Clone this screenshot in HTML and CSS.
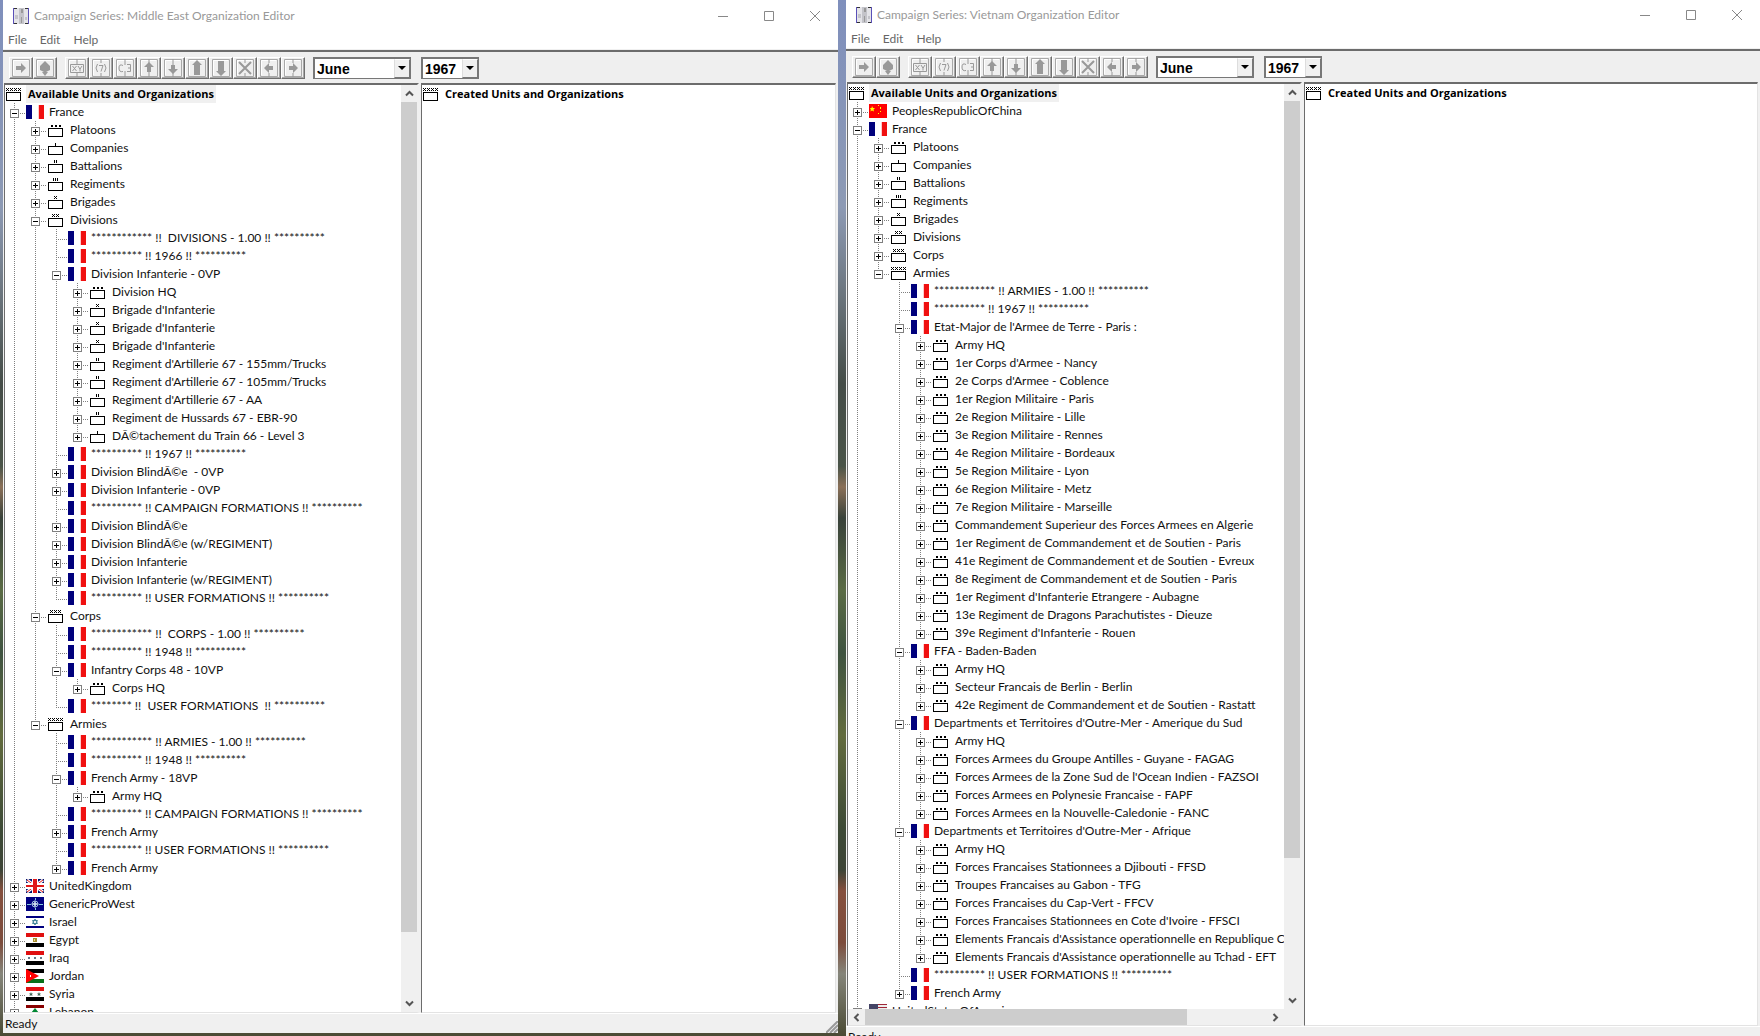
FILE: index.html
```html
<!DOCTYPE html>
<html lang="en">
<head>
<meta charset="utf-8">
<title>Organization Editor</title>
<link rel="stylesheet" href="styles.css">
</head>
<body>
<svg class="defs" width="0" height="0" aria-hidden="true">
  <symbol id="x" viewBox="0 0 3 3"><path d="M0 0h1v1h-1zM2 0h1v1h-1zM1 1h1v1h-1zM0 2h1v1h-1zM2 2h1v1h-1z"/></symbol>
  <symbol id="box" viewBox="0 0 18 18"><rect x="1.5" y="7.5" width="14" height="8" fill="#fff" stroke="#000"/></symbol>
  <symbol id="pl" viewBox="0 0 18 18"><use href="#box"/><path d="M4 4h2v2h-2zM8 4h2v2h-2zM12 4h2v2h-2z"/></symbol>
  <symbol id="co" viewBox="0 0 18 18"><use href="#box"/><path d="M8 4h1v3h-1z"/></symbol>
  <symbol id="bn" viewBox="0 0 18 18"><use href="#box"/><path d="M7 3h1v3h-1zM9 3h1v3h-1z"/></symbol>
  <symbol id="rg" viewBox="0 0 18 18"><use href="#box"/><path d="M6 3h1v3h-1zM8 3h1v3h-1zM10 3h1v3h-1z"/></symbol>
  <symbol id="bd" viewBox="0 0 18 18"><use href="#box"/><use href="#x" x="7" y="3" width="3" height="3"/></symbol>
  <symbol id="dv" viewBox="0 0 18 18"><use href="#box"/><use href="#x" x="5" y="3" width="3" height="3"/><use href="#x" x="9" y="3" width="3" height="3"/></symbol>
  <symbol id="cp" viewBox="0 0 18 18"><use href="#box"/><use href="#x" x="3" y="3" width="3" height="3"/><use href="#x" x="7" y="3" width="3" height="3"/><use href="#x" x="11" y="3" width="3" height="3"/></symbol>
  <symbol id="ar" viewBox="0 0 18 18"><use href="#box"/><use href="#x" x="1" y="3" width="3" height="3"/><use href="#x" x="5" y="3" width="3" height="3"/><use href="#x" x="9" y="3" width="3" height="3"/><use href="#x" x="13" y="3" width="3" height="3"/></symbol>
  <symbol id="fr" viewBox="0 0 18 18"><path fill="#00007c" d="M0 2h6v14h-6z"/><path fill="#fcc" d="M12 2h1v14h-1z"/><path fill="#f01010" d="M13 2h5v14h-5z"/></symbol>
  <symbol id="cn" viewBox="0 0 18 18"><path fill="#f00" d="M0 2h18v14H0z"/><path fill="#ff0" d="M3 4l1 2h2l-1.500 1.500.5 2-2-1-1.500 1 .3-2L1 6h1.500zM9 3h1v1h-1zM11 5h1v2h-1zM11 9h1v1h-1zM9 11h1v1h-1z"/></symbol>
  <symbol id="uk" viewBox="0 0 18 18"><path fill="#00106c" d="M0 2h18v14H0z"/><path stroke="#fff" stroke-width="3" d="M1 3l16 12M17 3L1 15"/><path stroke="#e01818" d="M1 3l16 12M17 3L1 15"/><path fill="#fff" d="M6 2h6v14H6zM0 6h18v6H0z"/><path fill="#e01818" d="M7 2h4v14H7zM0 8h18v2H0z"/></symbol>
  <symbol id="gp" viewBox="0 0 18 18"><path fill="#000080" d="M0 2h18v14H0z"/><circle cx="9" cy="9" r="3" fill="none" stroke="#9bd"/><path stroke="#8cd" d="M1 9.500h4M13 9.500h4M9.500 3v2M9.500 13v2"/><path fill="#cde" d="M9 5l1 3 3 1-3 1-1 3-1-3-3-1 3-1z"/></symbol>
  <symbol id="il" viewBox="0 0 18 18"><path fill="#000080" d="M0 3h18v2H0zM0 13h18v2H0z"/><path fill="none" stroke="#47889c" d="M9 6l2.500 4.500h-5zM9 12L6.500 7.500h5z"/></symbol>
  <symbol id="eg" viewBox="0 0 18 18"><path fill="#e01010" d="M0 2h18v4H0z"/><path d="M0 12h18v4H0z"/><path fill="#a89030" d="M7 7h4v4H7z"/><path fill="#e8d8a0" d="M8 8h1v2h-1z"/></symbol>
  <symbol id="iq" viewBox="0 0 18 18"><path fill="#e01010" d="M0 2h18v4H0z"/><path d="M0 12h18v4H0z"/><path fill="#678" d="M2 8h2v2H2zM8 8h2v2H8zM14 8h2v2h-2z"/></symbol>
  <symbol id="jo" viewBox="0 0 18 18"><path d="M0 2h18v4H0z"/><path fill="#087018" d="M0 12h18v4H0z"/><path fill="#f00" d="M0 2l13 7L0 16z"/><path fill="#fff" d="M4 8h1v2H4z"/></symbol>
  <symbol id="sy" viewBox="0 0 18 18"><path fill="#e01010" d="M0 2h18v4H0z"/><path d="M0 12h18v4H0z"/><path fill="#465" d="M5 7l.6 1.500H7L6 9.500l.5 1.500L5 10.200 3.500 11 4 9.500 3 8.500h1.400zM13 7l.6 1.500H15l-1 1 .5 1.500-1.500-.8-1.500.8.5-1.500-1-1h1.400z"/></symbol>
  <symbol id="lb" viewBox="0 0 18 18"><path fill="#800" d="M0 2h18v3H0zM0 13h18v3H0z"/><path fill="#083" d="M9 5l4 5h-3v2H8v-2H5z"/></symbol>
  <symbol id="us" viewBox="0 0 18 18"><path fill="#eee" d="M0 2h18v14H0z"/><path fill="#a02838" d="M0 2h18v1H0zM0 5h18v1H0zM0 8h18v1H0zM0 11h18v1H0zM0 14h18v1H0z"/><path fill="#446" d="M0 2h9v7H0z"/></symbol>
  <symbol id="app" viewBox="0 0 16 16"><path fill="#e4e4e8" d="M0 0h16v16H0z"/><path fill="#c4c4ca" d="M6 0h5v16H6zM2 7h3v4H2zM12 9h2v3h-2z"/><path fill="#999" d="M8 1h2v4H8zM8 9h1v6H8z"/><path fill="#5a50b8" d="M0 0h1v16H0zM15 0h1v16h-1z"/><path fill="#333" d="M1 0h3v1H1zM12 0h3v1h-3zM1 15h3v1H1zM12 15h3v1h-3z"/></symbol>
  <symbol id="frame" viewBox="0 0 18 18"><path fill="none" stroke="#a8a8a8" d="M.5.500h17v17H.5z"/><path fill="none" stroke="#fff" d="M1.500 16V1.500H16"/></symbol>
  <symbol id="t-right" viewBox="0 0 18 18"><use href="#frame"/><path fill="#999" d="M4 7h5V4l5 5-5 5v-3H4z"/></symbol>
  <symbol id="t-club" viewBox="0 0 18 18"><use href="#frame"/><path fill="#999" d="M9 2l5 5v4l-4 2h2l-3 4-3-4h2l-4-2V7z"/></symbol>
  <symbol id="t-xy" viewBox="0 0 18 18"><use href="#frame"/><path fill="none" stroke="#999" d="M2.500 5.500h13v8h-13zM9 0v5M9 14v4M4.500 7l4 5M8.500 7l-4 5M10 7l2 3 2-3M12 9.500v3"/></symbol>
  <symbol id="t-seven" viewBox="0 0 18 18"><use href="#frame"/><path fill="none" stroke="#999" d="M9 0v4M9 14v4M5.500 5q-3 4 0 8M12.500 5q3 4 0 8M7 6.500h4l-2 6"/></symbol>
  <symbol id="t-c3" viewBox="0 0 18 18"><use href="#frame"/><path fill="none" stroke="#999" d="M9 0v6M9 12v6M7 6.500Q3 4.500 3 9t4 3.500M11 5.500h3.500V9H12M14.500 9v3.500H11"/></symbol>
  <symbol id="t-up" viewBox="0 0 18 18"><use href="#frame"/><path fill="#999" d="M9 3l5 5h-3v5H7V8H4z"/><path stroke="#999" d="M9 0v18"/></symbol>
  <symbol id="t-down" viewBox="0 0 18 18"><use href="#frame"/><path fill="#999" d="M9 15l5-5h-3V6H7v4H4z"/><path stroke="#999" d="M9 0v18"/></symbol>
  <symbol id="t-bigup" viewBox="0 0 18 18"><use href="#frame"/><path fill="#999" d="M9 1l5 5h-2v10H6V6H4z"/></symbol>
  <symbol id="t-bigdown" viewBox="0 0 18 18"><use href="#frame"/><path fill="#999" d="M9 17l5-5h-2V2H6v10H4z"/></symbol>
  <symbol id="t-x" viewBox="0 0 18 18"><use href="#frame"/><path stroke="#999" stroke-width="2" d="M3 3l12 12M15 3L3 15"/><path stroke="#999" d="M9 0v4M9 14v4"/></symbol>
  <symbol id="t-l" viewBox="0 0 18 18"><use href="#frame"/><path fill="#999" d="M4 9l5-5v3h4v4H9v3z"/><path stroke="#999" d="M9 0v4M9 14v4"/></symbol>
  <symbol id="t-r" viewBox="0 0 18 18"><use href="#frame"/><path fill="#999" d="M14 9L9 4v3H5v4h4v3z"/><path stroke="#999" d="M9 0v4M9 14v4"/></symbol>
  <symbol id="min" viewBox="0 0 10 10"><path stroke="#888" d="M0 5.500h10"/></symbol>
  <symbol id="max" viewBox="0 0 10 10"><path fill="none" stroke="#888" d="M.5.500h9v9h-9z"/></symbol>
  <symbol id="close" viewBox="0 0 10 10"><path stroke="#888" d="M0 0l10 10M10 0L0 10"/></symbol>
  <symbol id="chev" viewBox="0 0 9 9"><path fill="none" stroke="#555" stroke-width="2" d="M1 6.500L4.500 3 8 6.500"/></symbol>
</svg>

<section class="window window-me">
  <header class="title">
    <svg width="16" height="16"><use href="#app"/></svg>
    <h1>Campaign Series: Middle East Organization Editor</h1>
    <button aria-label="Minimize"><svg width="10" height="10"><use href="#min"/></svg></button>
    <button aria-label="Maximize"><svg width="10" height="10"><use href="#max"/></svg></button>
    <button aria-label="Close"><svg width="10" height="10"><use href="#close"/></svg></button>
  </header>
  <nav class="menu"><button>File</button><button>Edit</button><button>Help</button></nav>
  <div class="toolbar">
    <div class="tools">
      <button aria-label="Add"><svg><use href="#t-right"/></svg></button>
      <button aria-label="Add all"><svg><use href="#t-club"/></svg></button>
    </div>
    <div class="tools">
      <button aria-label="Location"><svg><use href="#t-xy"/></svg></button>
      <button aria-label="Strength"><svg><use href="#t-seven"/></svg></button>
      <button aria-label="Command"><svg><use href="#t-c3"/></svg></button>
      <button aria-label="Up"><svg><use href="#t-up"/></svg></button>
      <button aria-label="Down"><svg><use href="#t-down"/></svg></button>
      <button aria-label="Move up"><svg><use href="#t-bigup"/></svg></button>
      <button aria-label="Move down"><svg><use href="#t-bigdown"/></svg></button>
      <button aria-label="Delete"><svg><use href="#t-x"/></svg></button>
      <button aria-label="Left"><svg><use href="#t-l"/></svg></button>
      <button aria-label="Right"><svg><use href="#t-r"/></svg></button>
    </div>
    <div class="combo month"><select aria-label="Month"><option>June</option></select><span></span></div>
    <div class="combo year"><select aria-label="Year"><option>1967</option></select><span></span></div>
  </div>
  <main class="panes">
    <div class="pane available">
      <div class="tree">
        <div class="root selected"><svg><use href="#ar"/></svg><h2>Available Units and Organizations</h2></div>
        <ul>
          <li><div><button class="minus" aria-label="Collapse"></button><svg><use href="#fr"/></svg>France</div>
            <ul>
              <li><div><button aria-label="Expand"></button><svg><use href="#pl"/></svg>Platoons</div></li>
              <li><div><button aria-label="Expand"></button><svg><use href="#co"/></svg>Companies</div></li>
              <li><div><button aria-label="Expand"></button><svg><use href="#bn"/></svg>Battalions</div></li>
              <li><div><button aria-label="Expand"></button><svg><use href="#rg"/></svg>Regiments</div></li>
              <li><div><button aria-label="Expand"></button><svg><use href="#bd"/></svg>Brigades</div></li>
              <li><div><button class="minus" aria-label="Collapse"></button><svg><use href="#dv"/></svg>Divisions</div>
                <ul>
                  <li><div><svg><use href="#fr"/></svg>************ !!  DIVISIONS - 1.00 !! **********</div></li>
                  <li><div><svg><use href="#fr"/></svg>********** !! 1966 !! **********</div></li>
                  <li><div><button class="minus" aria-label="Collapse"></button><svg><use href="#fr"/></svg>Division Infanterie - 0VP</div>
                    <ul>
                      <li><div><button aria-label="Expand"></button><svg><use href="#pl"/></svg>Division HQ</div></li>
                      <li><div><button aria-label="Expand"></button><svg><use href="#bd"/></svg>Brigade d'Infanterie</div></li>
                      <li><div><button aria-label="Expand"></button><svg><use href="#bd"/></svg>Brigade d'Infanterie</div></li>
                      <li><div><button aria-label="Expand"></button><svg><use href="#bd"/></svg>Brigade d'Infanterie</div></li>
                      <li><div><button aria-label="Expand"></button><svg><use href="#bn"/></svg>Regiment d'Artillerie 67 - 155mm/Trucks</div></li>
                      <li><div><button aria-label="Expand"></button><svg><use href="#bn"/></svg>Regiment d'Artillerie 67 - 105mm/Trucks</div></li>
                      <li><div><button aria-label="Expand"></button><svg><use href="#bn"/></svg>Regiment d'Artillerie 67 - AA</div></li>
                      <li><div><button aria-label="Expand"></button><svg><use href="#bn"/></svg>Regiment de Hussards 67 - EBR-90</div></li>
                      <li><div><button aria-label="Expand"></button><svg><use href="#co"/></svg>DÃ©tachement du Train 66 - Level 3</div></li>
                    </ul></li>
                  <li><div><svg><use href="#fr"/></svg>********** !! 1967 !! **********</div></li>
                  <li><div><button aria-label="Expand"></button><svg><use href="#fr"/></svg>Division BlindÃ©e  - 0VP</div></li>
                  <li><div><button aria-label="Expand"></button><svg><use href="#fr"/></svg>Division Infanterie - 0VP</div></li>
                  <li><div><svg><use href="#fr"/></svg>********** !! CAMPAIGN FORMATIONS !! **********</div></li>
                  <li><div><button aria-label="Expand"></button><svg><use href="#fr"/></svg>Division BlindÃ©e</div></li>
                  <li><div><button aria-label="Expand"></button><svg><use href="#fr"/></svg>Division BlindÃ©e (w/REGIMENT)</div></li>
                  <li><div><button aria-label="Expand"></button><svg><use href="#fr"/></svg>Division Infanterie</div></li>
                  <li><div><button aria-label="Expand"></button><svg><use href="#fr"/></svg>Division Infanterie (w/REGIMENT)</div></li>
                  <li><div><svg><use href="#fr"/></svg>********** !! USER FORMATIONS !! **********</div></li>
                </ul></li>
              <li><div><button class="minus" aria-label="Collapse"></button><svg><use href="#cp"/></svg>Corps</div>
                <ul>
                  <li><div><svg><use href="#fr"/></svg>************ !!  CORPS - 1.00 !! **********</div></li>
                  <li><div><svg><use href="#fr"/></svg>********** !! 1948 !! **********</div></li>
                  <li><div><button class="minus" aria-label="Collapse"></button><svg><use href="#fr"/></svg>Infantry Corps 48 - 10VP</div>
                    <ul>
                      <li><div><button aria-label="Expand"></button><svg><use href="#pl"/></svg>Corps HQ</div></li>
                    </ul></li>
                  <li><div><svg><use href="#fr"/></svg>******** !!  USER FORMATIONS  !! **********</div></li>
                </ul></li>
              <li><div><button class="minus" aria-label="Collapse"></button><svg><use href="#ar"/></svg>Armies</div>
                <ul>
                  <li><div><svg><use href="#fr"/></svg>************ !! ARMIES - 1.00 !! **********</div></li>
                  <li><div><svg><use href="#fr"/></svg>********** !! 1948 !! **********</div></li>
                  <li><div><button class="minus" aria-label="Collapse"></button><svg><use href="#fr"/></svg>French Army - 18VP</div>
                    <ul>
                      <li><div><button aria-label="Expand"></button><svg><use href="#pl"/></svg>Army HQ</div></li>
                    </ul></li>
                  <li><div><svg><use href="#fr"/></svg>********** !! CAMPAIGN FORMATIONS !! **********</div></li>
                  <li><div><button aria-label="Expand"></button><svg><use href="#fr"/></svg>French Army</div></li>
                  <li><div><svg><use href="#fr"/></svg>********** !! USER FORMATIONS !! **********</div></li>
                  <li><div><button aria-label="Expand"></button><svg><use href="#fr"/></svg>French Army</div></li>
                </ul></li>
            </ul></li>
          <li><div><button aria-label="Expand"></button><svg><use href="#uk"/></svg>UnitedKingdom</div></li>
          <li><div><button aria-label="Expand"></button><svg><use href="#gp"/></svg>GenericProWest</div></li>
          <li><div><button aria-label="Expand"></button><svg><use href="#il"/></svg>Israel</div></li>
          <li><div><button aria-label="Expand"></button><svg><use href="#eg"/></svg>Egypt</div></li>
          <li><div><button aria-label="Expand"></button><svg><use href="#iq"/></svg>Iraq</div></li>
          <li><div><button aria-label="Expand"></button><svg><use href="#jo"/></svg>Jordan</div></li>
          <li><div><button aria-label="Expand"></button><svg><use href="#sy"/></svg>Syria</div></li>
          <li><div><button aria-label="Expand"></button><svg><use href="#lb"/></svg>Lebanon</div></li>
        </ul>
      </div>
      <div class="vscroll">
        <button aria-label="Scroll up"><svg><use href="#chev"/></svg></button>
        <div class="track"><div class="thumb" style="height:93%"></div></div>
        <button aria-label="Scroll down"><svg class="down"><use href="#chev"/></svg></button>
      </div>
    </div>
    <div class="pane created">
      <div class="tree"><div class="root"><svg><use href="#ar"/></svg><h2>Created Units and Organizations</h2></div></div>
    </div>
  </main>
  <footer class="status">Ready<svg class="grip" width="12" height="12"><path stroke="#999" stroke-width="2" d="M0 12L12 0M4 12l8-8M8 12l4-4"/></svg></footer>
</section>

<section class="window window-vn">
  <header class="title">
    <svg width="16" height="16"><use href="#app"/></svg>
    <h1>Campaign Series: Vietnam Organization Editor</h1>
    <button aria-label="Minimize"><svg width="10" height="10"><use href="#min"/></svg></button>
    <button aria-label="Maximize"><svg width="10" height="10"><use href="#max"/></svg></button>
    <button aria-label="Close"><svg width="10" height="10"><use href="#close"/></svg></button>
  </header>
  <nav class="menu"><button>File</button><button>Edit</button><button>Help</button></nav>
  <div class="toolbar">
    <div class="tools">
      <button aria-label="Add"><svg><use href="#t-right"/></svg></button>
      <button aria-label="Add all"><svg><use href="#t-club"/></svg></button>
    </div>
    <div class="tools">
      <button aria-label="Location"><svg><use href="#t-xy"/></svg></button>
      <button aria-label="Strength"><svg><use href="#t-seven"/></svg></button>
      <button aria-label="Command"><svg><use href="#t-c3"/></svg></button>
      <button aria-label="Up"><svg><use href="#t-up"/></svg></button>
      <button aria-label="Down"><svg><use href="#t-down"/></svg></button>
      <button aria-label="Move up"><svg><use href="#t-bigup"/></svg></button>
      <button aria-label="Move down"><svg><use href="#t-bigdown"/></svg></button>
      <button aria-label="Delete"><svg><use href="#t-x"/></svg></button>
      <button aria-label="Left"><svg><use href="#t-l"/></svg></button>
      <button aria-label="Right"><svg><use href="#t-r"/></svg></button>
    </div>
    <div class="combo month"><select aria-label="Month"><option>June</option></select><span></span></div>
    <div class="combo year"><select aria-label="Year"><option>1967</option></select><span></span></div>
  </div>
  <main class="panes">
    <div class="pane available">
      <div class="tree">
        <div class="root selected"><svg><use href="#ar"/></svg><h2>Available Units and Organizations</h2></div>
        <ul>
          <li><div><button aria-label="Expand"></button><svg><use href="#cn"/></svg>PeoplesRepublicOfChina</div></li>
          <li><div><button class="minus" aria-label="Collapse"></button><svg><use href="#fr"/></svg>France</div>
            <ul>
              <li><div><button aria-label="Expand"></button><svg><use href="#pl"/></svg>Platoons</div></li>
              <li><div><button aria-label="Expand"></button><svg><use href="#co"/></svg>Companies</div></li>
              <li><div><button aria-label="Expand"></button><svg><use href="#bn"/></svg>Battalions</div></li>
              <li><div><button aria-label="Expand"></button><svg><use href="#rg"/></svg>Regiments</div></li>
              <li><div><button aria-label="Expand"></button><svg><use href="#bd"/></svg>Brigades</div></li>
              <li><div><button aria-label="Expand"></button><svg><use href="#dv"/></svg>Divisions</div></li>
              <li><div><button aria-label="Expand"></button><svg><use href="#cp"/></svg>Corps</div></li>
              <li><div><button class="minus" aria-label="Collapse"></button><svg><use href="#ar"/></svg>Armies</div>
                <ul>
                  <li><div><svg><use href="#fr"/></svg>************ !! ARMIES - 1.00 !! **********</div></li>
                  <li><div><svg><use href="#fr"/></svg>********** !! 1967 !! **********</div></li>
                  <li><div><button class="minus" aria-label="Collapse"></button><svg><use href="#fr"/></svg>Etat-Major de l'Armee de Terre - Paris :</div>
                    <ul>
                      <li><div><button aria-label="Expand"></button><svg><use href="#pl"/></svg>Army HQ</div></li>
                      <li><div><button aria-label="Expand"></button><svg><use href="#pl"/></svg>1er Corps d'Armee - Nancy</div></li>
                      <li><div><button aria-label="Expand"></button><svg><use href="#pl"/></svg>2e Corps d'Armee - Coblence</div></li>
                      <li><div><button aria-label="Expand"></button><svg><use href="#pl"/></svg>1er Region Militaire - Paris</div></li>
                      <li><div><button aria-label="Expand"></button><svg><use href="#pl"/></svg>2e Region Militaire - Lille</div></li>
                      <li><div><button aria-label="Expand"></button><svg><use href="#pl"/></svg>3e Region Militaire - Rennes</div></li>
                      <li><div><button aria-label="Expand"></button><svg><use href="#pl"/></svg>4e Region Militaire - Bordeaux</div></li>
                      <li><div><button aria-label="Expand"></button><svg><use href="#pl"/></svg>5e Region Militaire - Lyon</div></li>
                      <li><div><button aria-label="Expand"></button><svg><use href="#pl"/></svg>6e Region Militaire - Metz</div></li>
                      <li><div><button aria-label="Expand"></button><svg><use href="#pl"/></svg>7e Region Militaire - Marseille</div></li>
                      <li><div><button aria-label="Expand"></button><svg><use href="#pl"/></svg>Commandement Superieur des Forces Armees en Algerie</div></li>
                      <li><div><button aria-label="Expand"></button><svg><use href="#pl"/></svg>1er Regiment de Commandement et de Soutien - Paris</div></li>
                      <li><div><button aria-label="Expand"></button><svg><use href="#pl"/></svg>41e Regiment de Commandement et de Soutien - Evreux</div></li>
                      <li><div><button aria-label="Expand"></button><svg><use href="#pl"/></svg>8e Regiment de Commandement et de Soutien - Paris</div></li>
                      <li><div><button aria-label="Expand"></button><svg><use href="#pl"/></svg>1er Regiment d'Infanterie Etrangere - Aubagne</div></li>
                      <li><div><button aria-label="Expand"></button><svg><use href="#pl"/></svg>13e Regiment de Dragons Parachutistes - Dieuze</div></li>
                      <li><div><button aria-label="Expand"></button><svg><use href="#pl"/></svg>39e Regiment d'Infanterie - Rouen</div></li>
                    </ul></li>
                  <li><div><button class="minus" aria-label="Collapse"></button><svg><use href="#fr"/></svg>FFA - Baden-Baden</div>
                    <ul>
                      <li><div><button aria-label="Expand"></button><svg><use href="#pl"/></svg>Army HQ</div></li>
                      <li><div><button aria-label="Expand"></button><svg><use href="#pl"/></svg>Secteur Francais de Berlin - Berlin</div></li>
                      <li><div><button aria-label="Expand"></button><svg><use href="#pl"/></svg>42e Regiment de Commandement et de Soutien - Rastatt</div></li>
                    </ul></li>
                  <li><div><button class="minus" aria-label="Collapse"></button><svg><use href="#fr"/></svg>Departments et Territoires d'Outre-Mer - Amerique du Sud</div>
                    <ul>
                      <li><div><button aria-label="Expand"></button><svg><use href="#pl"/></svg>Army HQ</div></li>
                      <li><div><button aria-label="Expand"></button><svg><use href="#pl"/></svg>Forces Armees du Groupe Antilles - Guyane - FAGAG</div></li>
                      <li><div><button aria-label="Expand"></button><svg><use href="#pl"/></svg>Forces Armees de la Zone Sud de l'Ocean Indien - FAZSOI</div></li>
                      <li><div><button aria-label="Expand"></button><svg><use href="#pl"/></svg>Forces Armees en Polynesie Francaise - FAPF</div></li>
                      <li><div><button aria-label="Expand"></button><svg><use href="#pl"/></svg>Forces Armees en la Nouvelle-Caledonie - FANC</div></li>
                    </ul></li>
                  <li><div><button class="minus" aria-label="Collapse"></button><svg><use href="#fr"/></svg>Departments et Territoires d'Outre-Mer - Afrique</div>
                    <ul>
                      <li><div><button aria-label="Expand"></button><svg><use href="#pl"/></svg>Army HQ</div></li>
                      <li><div><button aria-label="Expand"></button><svg><use href="#pl"/></svg>Forces Francaises Stationnees a Djibouti - FFSD</div></li>
                      <li><div><button aria-label="Expand"></button><svg><use href="#pl"/></svg>Troupes Francaises au Gabon - TFG</div></li>
                      <li><div><button aria-label="Expand"></button><svg><use href="#pl"/></svg>Forces Francaises du Cap-Vert - FFCV</div></li>
                      <li><div><button aria-label="Expand"></button><svg><use href="#pl"/></svg>Forces Francaises Stationnees en Cote d'Ivoire - FFSCI</div></li>
                      <li><div><button aria-label="Expand"></button><svg><use href="#pl"/></svg>Elements Francais d'Assistance operationnelle en Republique C</div></li>
                      <li><div><button aria-label="Expand"></button><svg><use href="#pl"/></svg>Elements Francais d'Assistance operationnelle au Tchad - EFT</div></li>
                    </ul></li>
                  <li><div><svg><use href="#fr"/></svg>********** !! USER FORMATIONS !! **********</div></li>
                  <li><div><button aria-label="Expand"></button><svg><use href="#fr"/></svg>French Army</div></li>
                </ul></li>
            </ul></li>
          <li><div><button aria-label="Expand"></button><svg><use href="#us"/></svg>UnitedStatesOfAmerica</div></li>
        </ul>
      </div>
      <div class="vscroll">
        <button aria-label="Scroll up"><svg><use href="#chev"/></svg></button>
        <div class="track"><div class="thumb" style="height:85%"></div></div>
        <button aria-label="Scroll down"><svg class="down"><use href="#chev"/></svg></button>
      </div>
      <div class="hscroll">
        <button aria-label="Scroll left"><svg class="left"><use href="#chev"/></svg></button>
        <div class="track"><div class="thumb" style="width:80%"></div></div>
        <button aria-label="Scroll right"><svg class="right"><use href="#chev"/></svg></button>
      </div>
    </div>
    <div class="pane created">
      <div class="tree"><div class="root"><svg><use href="#ar"/></svg><h2>Created Units and Organizations</h2></div></div>
    </div>
  </main>
  <footer class="status">Ready</footer>
</section>
</body>
</html>
```
FILE: styles.css
```css
* { box-sizing: border-box; }

body {
  margin: 0;
  height: 100vh;
  overflow: hidden;
  display: flex;
  gap: 8px;
  padding-left: 3px;
  font: 12px/18px Lato, "Open Sans", sans-serif;
  color: #111;
  background: linear-gradient(#7f8fbc 0%, #8d9ab4 20%, #6d7780 28%, #454d48 37%, #4a5448 45%, #8a7058 47%, #39423a 50%, #5a6b45 57%, #3f5340 63%, #626b3e 71%, #3d4a36 80%, #3d4436 84%, #85503e 86%, #7c4c3c 91%, #85857a 94%, #4a4a34 100%);
}

.defs { display: block; position: absolute; }

h1, h2 { margin: 0; font-size: inherit; line-height: inherit; }

button {
  margin: 0;
  padding: 0;
  border: 0;
  background: none;
  font: inherit;
  color: inherit;
}

.window {
  display: flex;
  flex-direction: column;
  min-width: 0;
  background: #f0f0f0;
}
.window-me { flex: 835 1 0; margin-bottom: 3px; }
.window-vn { flex: 914 1 0; margin: -1px 0 -10px; }

.title {
  flex: none;
  display: flex;
  align-items: center;
  height: 31px;
  padding-left: 10px;
  background: #fff;
  color: #999;
}
.title h1 { flex: 1; margin-left: 5px; font-weight: 400; }
.title button { display: grid; place-items: center; width: 46px; height: 30px; }

.menu {
  flex: none;
  display: flex;
  gap: 13px;
  height: 19px;
  padding-left: 5px;
  background: #fff;
  border-bottom: 1px solid #f0f0f0;
  color: #666;
}

.toolbar {
  flex: none;
  display: flex;
  align-items: center;
  gap: 8px;
  height: 33px;
  padding-left: 6px;
  border-top: 2px solid #6c6c6c;
  background: #efefef;
}
.tools { display: flex; }
.tools button {
  display: grid;
  place-items: center;
  width: 24px;
  height: 22px;
  border: 1px solid;
  border-color: #fff #707070 #707070 #fff;
  box-shadow: inset -1px -1px #a8a8a8;
}
.tools svg { width: 18px; height: 18px; }

.combo {
  display: flex;
  height: 22px;
  border: 1px solid #777;
  border-width: 2px 1px 1px 2px;
  background: #fff;
}
.month { width: 98px; }
.year { width: 58px; margin-left: 2px; }
.combo select {
  appearance: none;
  flex: 1;
  min-width: 0;
  margin: 0;
  padding: 2px 0 0 2px;
  border: 0;
  background: #fff;
  font: bold 14px/16px "Liberation Sans", Arial, sans-serif;
  color: #000;
}
.combo span {
  display: grid;
  place-items: center;
  width: 16px;
  border: 1px solid;
  border-color: #fff #777 #777 #ddd;
  background: #f0f0f0;
  pointer-events: none;
}
.combo span::after {
  content: "";
  border: 4px solid transparent;
  border-top-color: #000;
  border-bottom: 0;
}

.panes { flex: 1; min-height: 0; display: flex; gap: 2px; padding: 0 2px 0 1px; }
.pane {
  min-width: 0;
  min-height: 0;
  overflow: hidden;
  display: grid;
  grid-template: minmax(0, 1fr) auto / minmax(0, 1fr) auto;
  border: 1px solid #6c6c6c;
  border-top-width: 2px;
  border-right-color: #e3e3e3;
  border-bottom-color: #e3e3e3;
  background: #fff;
}
.available { flex: 0 0 415px; border-right: 2px solid #f0f0f0; }
.window-vn .available { flex-basis: 455px; }
.created { flex: 1; }

.tree { overflow: hidden; }
.tree ul { margin: 0; padding: 0; list-style: none; }
.tree li {
  background: repeating-linear-gradient(#808080 0 1px, transparent 1px 2px) 9px 0 / 1px 100% no-repeat;
}
.tree li li:last-child { background-size: 1px 10px; }
.tree li ul { padding-left: 21px; }
.tree li div {
  display: flex;
  height: 18px;
  padding-left: 21px;
  white-space: pre;
  background: repeating-linear-gradient(90deg, #808080 0 1px, transparent 1px 2px) 9px 10px / 12px 1px no-repeat;
}
.tree li button {
  flex: none;
  width: 9px;
  height: 9px;
  margin: 6px 7px 0 -16px;
  border: 1px solid #808080;
  background:
    linear-gradient(#000, #000) 1px 3px / 5px 1px no-repeat,
    linear-gradient(#000, #000) 3px 1px / 1px 5px no-repeat,
    #fff;
}
.tree li button.minus { background: linear-gradient(#000, #000) 1px 3px / 5px 1px no-repeat, #fff; }
.tree svg { flex: none; width: 18px; height: 18px; }
.tree li svg { margin-right: 5px; }

.root { display: flex; height: 18px; white-space: nowrap; }
.root svg { margin-right: 3px; }
.root h2 { padding: 0 2px; font: 700 11px/18px "Open Sans", sans-serif; color: #000; }
.selected h2 { background: #f0f0f0; }

.vscroll { display: flex; flex-direction: column; width: 16px; background: #f0f0f0; }
.hscroll { display: flex; height: 16px; background: #f0f0f0; grid-column: 1 / 3; padding-right: 16px; }
.vscroll button, .hscroll button { flex: none; display: grid; place-items: center; width: 17px; height: 17px; }
.vscroll button { width: 16px; }
.hscroll button { height: 16px; }
.track { flex: 1; min-height: 0; }
.thumb { height: 100%; background: #cdcdcd; }
.vscroll svg, .hscroll svg { width: 9px; height: 9px; }
.down { transform: rotate(180deg); }
.left { transform: rotate(-90deg); }
.right { transform: rotate(90deg); }

.status {
  flex: none;
  display: flex;
  justify-content: space-between;
  align-items: center;
  height: 20px;
  padding: 1px 0 0 2px;
  border-top: 1px solid #fff;
}
.grip { align-self: flex-end; }
```
